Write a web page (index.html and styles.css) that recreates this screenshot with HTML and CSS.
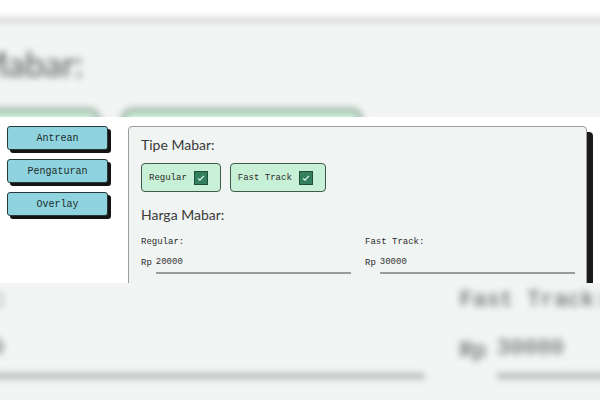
FILE: index.html
```html
<!DOCTYPE html>
<html lang="en">
<head>
  <meta charset="UTF-8">
  <meta name="viewport" content="width=device-width, initial-scale=1.0">
  <title>Pengaturan Mabar</title>
  <link rel="stylesheet" href="styles.css">
</head>
<body>
  <div class="backdrop" id="backdrop"></div>

  <div class="strip">
    <div class="app" id="app">
      <div class="sidebar">
        <button class="nav-btn">Antrean</button>
        <button class="nav-btn">Pengaturan</button>
        <button class="nav-btn">Overlay</button>
      </div>

      <div class="panel">
        <h2 class="panel-title">Tipe Mabar:</h2>
        <div class="chips">
          <label class="chip">
            <span>Regular</span>
            <span class="check">
              <svg viewBox="0 0 14 14" width="10" height="10"><path d="M3 7.5l2.5 2.5L11 4" fill="none" stroke="#e8fff2" stroke-width="1.6"/></svg>
            </span>
          </label>
          <label class="chip">
            <span>Fast Track</span>
            <span class="check">
              <svg viewBox="0 0 14 14" width="10" height="10"><path d="M3 7.5l2.5 2.5L11 4" fill="none" stroke="#e8fff2" stroke-width="1.6"/></svg>
            </span>
          </label>
        </div>

        <h2 class="panel-title price-title">Harga Mabar:</h2>
        <div class="prices">
          <div class="price">
            <div class="price-label">Regular:</div>
            <div class="price-row">
              <span>Rp</span>
              <input class="price-input" type="text" value="20000">
            </div>
          </div>
          <div class="price">
            <div class="price-label">Fast Track:</div>
            <div class="price-row">
              <span>Rp</span>
              <input class="price-input" type="text" value="30000">
            </div>
          </div>
        </div>
      </div>
    </div>
  </div>

  <script>
    // zoomed copy of the settings view behind the strip
    const app = document.getElementById('app');
    const copy = app.cloneNode(true);
    copy.removeAttribute('id');
    copy.classList.add('app-copy');
    document.getElementById('backdrop').appendChild(copy);
  </script>
</body>
</html>
```

FILE: styles.css
```css
body {
  margin: 0;
  width: 600px;
  height: 400px;
  overflow: hidden;
  background: #fff;
  font-family: "Liberation Mono", monospace;
  color: #2b2b2b;
}

.backdrop {
  position: fixed;
  top: 0;
  left: 0;
  width: 600px;
  height: 400px;
  overflow: hidden;
  background: #fff;
}

.strip {
  position: absolute;
  top: 117px;
  left: 0;
  width: 600px;
  height: 166px;
  overflow: hidden;
  background: #fff;
}

.app {
  display: flex;
  gap: 20px;
  width: 600px;
  padding: 9px 0 0 7px;
  box-sizing: border-box;
  background: #fff;
}

.app-copy {
  transform-origin: 0 0;
  transform: translate(-453px, -3px) scale(2.5, 2.43);
  filter: blur(1.5px);
  opacity: 0.85;
}

.sidebar {
  display: flex;
  flex-direction: column;
  gap: 9px;
  width: 101px;
  flex-shrink: 0;
}

.nav-btn {
  height: 24px;
  padding: 0;
  font-family: "Liberation Mono", monospace;
  font-size: 10px;
  color: #1d2b2e;
  background: #8ed3dd;
  border: 1px solid #27383b;
  border-radius: 3px;
  box-shadow: 3px 3px 0 #141414;
}

.panel {
  width: 459px;
  box-sizing: border-box;
  padding: 10px 11px 30px 12px;
  background: #f0f4f3;
  border: 1px solid #9c9c9c;
  border-radius: 4px;
  box-shadow: 6px 6px 0 #1b1b1b;
}

.panel-title {
  margin: 0;
  font-family: Lato, "Open Sans", sans-serif;
  font-weight: 400;
  font-size: 14px;
  line-height: 16px;
  color: #3a3a3a;
}

.chips {
  display: flex;
  gap: 9px;
  margin-top: 10px;
}

.chip {
  display: flex;
  align-items: center;
  gap: 7px;
  height: 29px;
  box-sizing: border-box;
  padding: 0 12px 0 7px;
  font-size: 9px;
  background: #c8f0d6;
  border: 1px solid #3f5a4b;
  border-radius: 4px;
}

.check {
  display: flex;
  align-items: center;
  justify-content: center;
  width: 14px;
  height: 14px;
  box-sizing: border-box;
  background: #34805e;
  border: 1px solid #1e4f3a;
}

.price-title {
  margin-top: 15px;
}

.prices {
  display: grid;
  grid-template-columns: 1fr 1fr;
  column-gap: 14px;
  margin-top: 13px;
}

.price-label {
  font-size: 9px;
  line-height: 12px;
}

.price-row {
  display: flex;
  align-items: center;
  gap: 4px;
  margin-top: 4px;
  font-size: 9px;
}

.price-input {
  flex: 1;
  min-width: 0;
  height: 20px;
  padding: 0;
  font-family: "Liberation Mono", monospace;
  font-size: 9px;
  color: #333;
  background: transparent;
  border: none;
  border-bottom: 2px solid #9a9a9a;
}
```
